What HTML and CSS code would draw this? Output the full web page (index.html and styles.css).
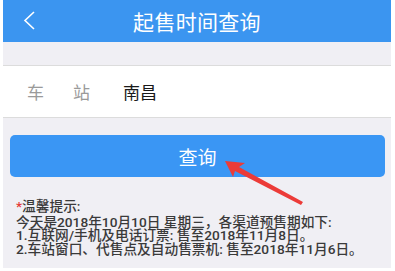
FILE: index.html
```html
<!DOCTYPE html>
<html lang="zh">
<head>
<meta charset="utf-8">
<link rel="stylesheet" href="styles.css">
</head>
<body>
<div class="page">
  <header class="bar">
    <svg class="back" width="14" height="22" viewBox="0 0 14 22"><polyline points="11,2 2,10.5 11,19" fill="none" stroke="#fff" stroke-width="1.6"/></svg>
    <h1 class="title">起售时间查询</h1>
  </header>
  <div class="row">
    <span class="label"><span class="c1">车</span><span>站</span></span>
    <span class="value">南昌</span>
  </div>
  <button class="btn">查询</button>
  <div class="tips">
    <p class="tip-head"><span class="star">*</span>温馨提示:</p>
    <p>今天是2018年10月10日 星期三，各渠道预售期如下:</p>
    <p>1.互联网/手机及电话订票: 售至2018年11月8日。</p>
    <p>2.车站窗口、代售点及自动售票机: 售至2018年11月6日。</p>
  </div>
  <svg class="arrow" width="395" height="271" viewBox="0 0 395 271">
    <polygon points="225,161 245,163 239,167 303,202 301,205 235,171 233,177" fill="#ec3b38"/>
  </svg>
</div>
</body>
</html>
```
FILE: styles.css
```css
html, body {
  margin: 0;
  padding: 0;
  background: #fff;
}
body {
  width: 395px;
  height: 271px;
  overflow: hidden;
  font-family: Roboto, "Noto Sans CJK SC", sans-serif;
}
.page {
  position: relative;
  margin: 0 4px 0 3px;
  height: 268px;
  background: #f0eff4;
  display: flex;
  flex-direction: column;
}
.bar {
  height: 42px;
  background: #3b95f0;
  display: flex;
  align-items: center;
  justify-content: center;
  position: relative;
}
.back {
  position: absolute;
  left: 20px;
  top: 10px;
}
.title {
  margin: 0;
  font-weight: normal;
  font-size: 21px;
  color: #fff;
  letter-spacing: 0.3px;
}
.row {
  margin-top: 23px;
  height: 51px;
  background: #fff;
  border-top: 1px solid #dcdcdc;
  border-bottom: 1px solid #dcdcdc;
  display: flex;
  align-items: center;
  padding-left: 24px;
  font-size: 17px;
}
.label {
  color: #9a9a9a;
  display: flex;
}
.c1 {
  margin-right: 29px;
}
.value {
  margin-left: 33px;
  color: #1a1a1a;
}
.btn {
  margin: 17px 6px 0 7px;
  height: 42px;
  border: none;
  border-radius: 5px;
  background: #3a96f4;
  color: #fff;
  font-family: inherit;
  font-size: 19px;
  padding: 0;
}
.tips {
  margin-top: 23px;
  padding-left: 13px;
  color: #3a3a3a;
  font-size: 13.7px;
  font-weight: 500;
}
.tips p {
  margin: 0;
  line-height: 13.5px;
  white-space: nowrap;
}
.tips .tip-head {
  margin-bottom: 2px;
}
.star {
  color: #e53935;
}
.arrow {
  position: absolute;
  left: -3px;
  top: 0;
}
```
